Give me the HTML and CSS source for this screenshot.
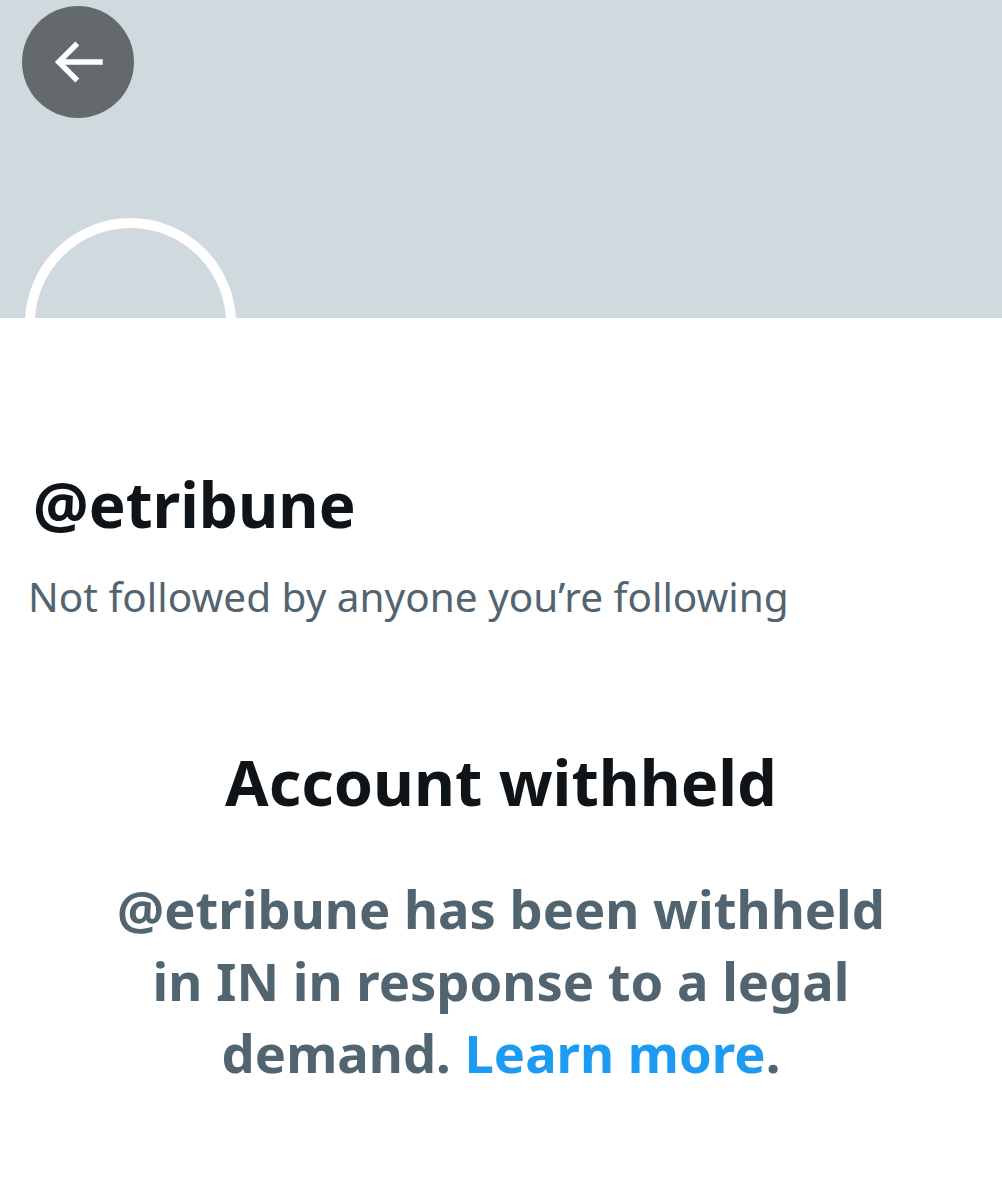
FILE: index.html
```html
<!DOCTYPE html>
<html lang="en">
<head>
    <meta charset="UTF-8">
    <meta name="viewport" content="width=device-width, initial-scale=1.0">
    <title>@etribune</title>
    <link rel="stylesheet" href="styles.css">
</head>
<body>
    <div class="banner">
        <button class="back-button" aria-label="Back">
            <svg viewBox="0 0 24 24" width="66" height="66">
                <path d="M7.414 13l5.043 5.04-1.414 1.42L3.586 12l7.457-7.46 1.414 1.42L7.414 11H21v2H7.414z" fill="#ffffff"/>
            </svg>
        </button>
        <div class="avatar"></div>
    </div>

    <div class="profile">
        <div class="handle">@etribune</div>
        <div class="followers">Not followed by anyone you’re following</div>
    </div>

    <div class="withheld">
        <div class="withheld-title">Account withheld</div>
        <div class="withheld-text">@etribune has been withheld in IN in response to a legal demand. <span class="link">Learn more</span>.</div>
    </div>
</body>
</html>
```

FILE: styles.css
```css
body {
    font-family: "Noto Sans", Arial, sans-serif;
    margin: 0;
    padding: 0;
    background-color: #ffffff;
}

.banner {
    height: 318px;
    background-color: #cfd9de;
    position: relative;
    overflow: hidden;
}

.back-button {
    position: absolute;
    top: 6px;
    left: 22px;
    width: 112px;
    height: 112px;
    border: none;
    border-radius: 50%;
    background-color: #64696d;
    display: flex;
    justify-content: center;
    align-items: center;
    padding: 0;
}

.avatar {
    position: absolute;
    top: 218px;
    left: 25px;
    width: 191px;
    height: 191px;
    border: 10px solid #ffffff;
    border-radius: 50%;
    background-color: #cfd9de;
}

.profile {
    padding: 146px 28px 0;
}

.handle {
    font-size: 62px;
    font-weight: bold;
    color: #0f1419;
    padding-left: 5px;
    line-height: 80px;
}

.followers {
    font-size: 40.5px;
    color: #536471;
    line-height: 56px;
    margin-top: 25px;
}

.withheld {
    text-align: center;
    padding: 117px 100px 0;
}

.withheld-title {
    font-size: 63px;
    font-weight: bold;
    color: #0f1419;
    line-height: 80px;
}

.withheld-text {
    margin-top: 51px;
    font-size: 52.5px;
    font-weight: bold;
    color: #536471;
    line-height: 72px;
}

.link {
    color: #1d9bf0;
}
```
